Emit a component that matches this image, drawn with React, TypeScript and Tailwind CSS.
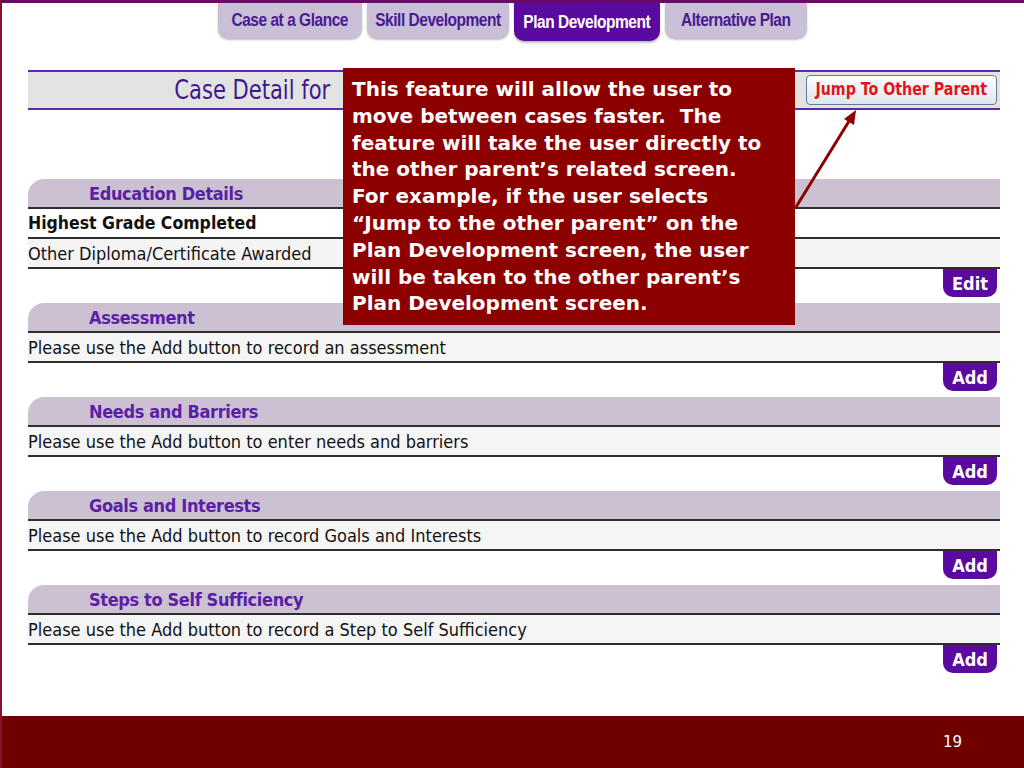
import React from "react";

const tabs = [
  { label: "Case at a Glance", w: "w-[144px]", active: false },
  { label: "Skill Development", w: "w-[142px]", active: false },
  { label: "Plan Development", w: "w-[146px]", active: true },
  { label: "Alternative Plan", w: "w-[142px]", active: false },
];

const narrow = { fontFamily: '"Liberation Sans Narrow", "Liberation Sans", sans-serif' };
const cond = { fontFamily: '"DejaVu Sans Condensed", "DejaVu Sans", sans-serif' };

type Row = { text: string; bold?: boolean; bg: string };

const Section = ({ title, rows, button }: { title: string; rows: Row[]; button: string }) => (
  <div className="flex flex-col">
    <div className="h-[30px] rounded-tl-[16px] bg-[#cbc1d3] border-b-2 border-[#2e2e2e] pl-[61px] flex items-center">
      <span className="text-[18px] font-bold text-[#5b1fa6] tracking-[-0.02em]" style={cond}>
        {title}
      </span>
    </div>
    {rows.map((r) => (
      <div key={r.text} className={`h-[30px] border-b-2 border-[#2e2e2e] flex items-center ${r.bg}`}>
        <span className={`text-[#111] ${r.bold ? "font-bold text-[17.5px]" : "text-[18px]"}`} style={cond}>
          {r.text}
        </span>
      </div>
    ))}
    <div className="flex justify-end pr-[3px]">
      <div
        className="w-[54px] h-[28px] rounded-b-[10px] bg-[#5a0aa0] text-white font-bold text-[18px] flex items-center justify-center"
        style={cond}
      >
        {button}
      </div>
    </div>
  </div>
);

export default function App() {
  return (
    <div className="relative w-[1024px] h-[768px] bg-white overflow-hidden flex flex-col border-l-2 border-[#8a1030]">
      <div className="h-[3px] bg-[#690a66]" />

      <div className="h-[38px] flex gap-[5px] pl-[216px]">
        {tabs.map((t) => (
          <div
            key={t.label}
            className={`${t.w} ${t.active ? "h-[38px] bg-[#5a0a9e] text-white" : "h-[35px] bg-[#c9bfd6] text-[#4a1a92]"} rounded-b-[10px] shadow-[0_2px_2px_rgba(0,0,0,0.25)] flex items-center justify-center font-bold text-[18px] whitespace-nowrap`}
            style={narrow}
          >
            <span className="inline-block scale-x-[0.86] tracking-[-0.03em]">{t.label}</span>
          </div>
        ))}
      </div>

      <div className="ml-[26px] w-[972px] mt-[29px] flex flex-col">
        <div className="h-[40px] bg-[#e3e3e3] border-y-2 border-[#5b2bb0] flex items-center justify-between">
          <span className="w-[302px] text-right text-[26px] text-[#3b1a8c] whitespace-nowrap" style={cond}>
            <span className="inline-block origin-right scale-x-[0.9]">Case Detail for</span>
          </span>
          <div
            className="mr-[3px] w-[191px] h-[30px] rounded-[4px] border border-[#5f7c99] bg-gradient-to-b from-white to-[#dfe5ec] flex items-center justify-center text-[17px] font-bold text-[#e3141c] whitespace-nowrap"
            style={cond}
          >
            <span className="inline-block scale-x-[0.93]">Jump To Other Parent</span>
          </div>
        </div>

        <div className="mt-[69px] flex flex-col gap-[6px]">
          <Section
            title="Education Details"
            rows={[
              { text: "Highest Grade Completed", bold: true, bg: "bg-white" },
              { text: "Other Diploma/Certificate Awarded", bg: "bg-[#f4f4f4]" },
            ]}
            button="Edit"
          />
          <Section
            title="Assessment"
            rows={[{ text: "Please use the Add button to record an assessment", bg: "bg-[#f5f5f5]" }]}
            button="Add"
          />
          <Section
            title="Needs and Barriers"
            rows={[{ text: "Please use the Add button to enter needs and barriers", bg: "bg-[#f5f5f5]" }]}
            button="Add"
          />
          <Section
            title="Goals and Interests"
            rows={[{ text: "Please use the Add button to record Goals and Interests", bg: "bg-[#f5f5f5]" }]}
            button="Add"
          />
          <Section
            title="Steps to Self Sufficiency"
            rows={[{ text: "Please use the Add button to record a Step to Self Sufficiency", bg: "bg-[#f5f5f5]" }]}
            button="Add"
          />
        </div>
      </div>

      <div className="mt-auto h-[52px] bg-[#700000] flex items-center justify-end pr-[62px]">
        <span className="text-white text-[15px]" style={{ fontFamily: '"DejaVu Sans", sans-serif' }}>
          19
        </span>
      </div>

      {/* callout over the page */}
      <div
        className="absolute left-[341px] top-[68px] w-[452px] h-[257px] bg-[#8c0000] pl-[9px] pt-[8px] text-white font-bold text-[20px] leading-[26.8px] whitespace-nowrap"
        style={{ fontFamily: '"DejaVu Sans", Tahoma, sans-serif' }}
      >
        This feature will allow the user to<br />
        move between cases faster.&nbsp; The<br />
        feature will take the user directly to<br />
        the other parent’s related screen.<br />
        For example, if the user selects<br />
        “Jump to the other parent” on the<br />
        Plan Development screen, the user<br />
        will be taken to the other parent’s<br />
        Plan Development screen.
      </div>

      <svg className="absolute left-[780px] top-[100px] pointer-events-none" width="90" height="120" viewBox="0 0 90 120">
        <line x1="14" y1="107" x2="69" y2="18" stroke="#8c0000" strokeWidth="3" />
        <polygon points="74,10 62,19 72,25" fill="#8c0000" />
      </svg>
    </div>
  );
}
